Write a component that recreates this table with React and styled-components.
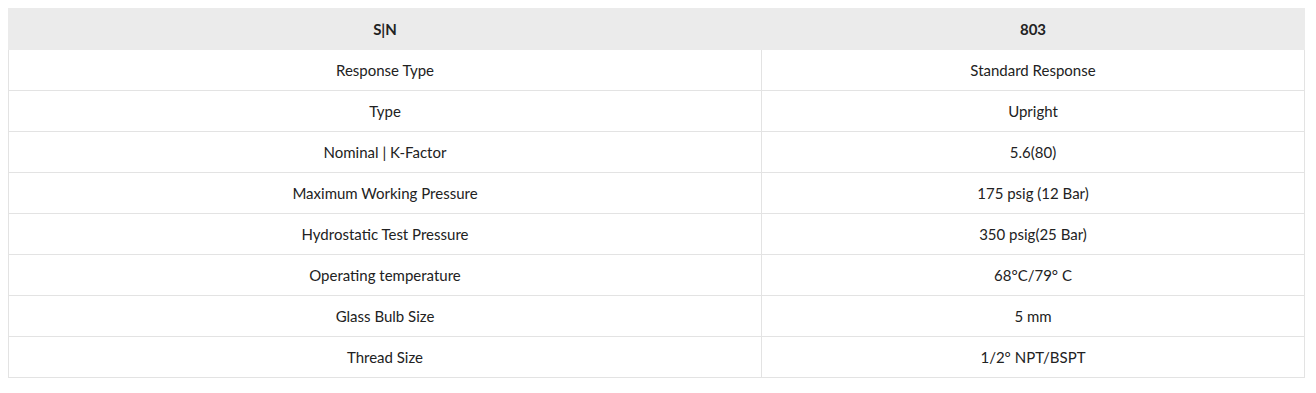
import React from "react";
import styled, { createGlobalStyle } from "styled-components";

const GlobalStyle = createGlobalStyle`
  body {
    margin: 8px;
    background: #fff;
    font-family: "Lato", "Open Sans", sans-serif;
    color: #222;
  }
`;

const Table = styled.table`
  width: 1297px;
  border-collapse: collapse;
  border: 1px solid #e3e3e3;
  font-size: 15px;
`;

const HeadCell = styled.th`
  background-color: #ebebeb;
  border: 1px solid #ebebeb;
  height: 40px;
  padding: 0 10px;
  font-weight: 700;
  text-align: center;
  color: #222;
  width: ${(p) => p.$width || "auto"};
`;

const Cell = styled.td`
  border: 1px solid #e3e3e3;
  height: 40px;
  padding: 0 10px;
  text-align: center;
  color: #222;
`;

const rows = [
  ["Response Type", "Standard Response"],
  ["Type", "Upright"],
  ["Nominal | K-Factor", "5.6(80)"],
  ["Maximum Working Pressure", "175 psig (12 Bar)"],
  ["Hydrostatic Test Pressure", "350 psig(25 Bar)"],
  ["Operating temperature", "68°C/79° C"],
  ["Glass Bulb Size", "5 mm"],
  ["Thread Size", "1/2° NPT/BSPT"],
];

function App() {
  return (
    <>
      <GlobalStyle />
      <Table>
        <thead>
          <tr>
            <HeadCell $width="732px">S|N</HeadCell>
            <HeadCell>803</HeadCell>
          </tr>
        </thead>
        <tbody>
          {rows.map(([label, value]) => (
            <tr key={label}>
              <Cell>{label}</Cell>
              <Cell>{value}</Cell>
            </tr>
          ))}
        </tbody>
      </Table>
    </>
  );
}

export default App;
